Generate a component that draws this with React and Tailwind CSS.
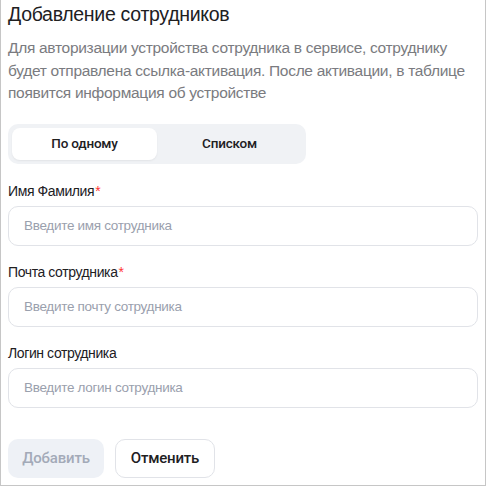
import React, { useState } from 'react';

const FIELDS = [
  { label: 'Имя Фамилия', placeholder: 'Введите имя сотрудника', required: true },
  { label: 'Почта сотрудника', placeholder: 'Введите почту сотрудника', required: true },
  { label: 'Логин сотрудника', placeholder: 'Введите логин сотрудника', required: false },
];

const TABS = [
  { id: 'single', label: 'По одному' },
  { id: 'list', label: 'Списком' },
];

export default function App() {
  const [tab, setTab] = useState('single');

  return (
    <div className="h-[486px] w-[486px] border-x border-b border-[#c6c6c6] bg-white px-[7px] font-['Liberation_Sans',Arial,sans-serif] text-[#21201f]">
      <h1 className="text-[19.5px] leading-[28px] tracking-[-0.3px]">Добавление сотрудников</h1>
      <p className="mt-[9px] text-[15.5px] leading-[22.5px] tracking-[-0.3px] text-[#7a7b80]">
        Для авторизации устройства сотрудника в сервисе, сотруднику будет отправлена ссылка-активация. После
        активации, в таблице появится информация об устройстве
      </p>

      {/* Mode switch */}
      <div className="mt-[19px] flex h-10 w-[298px] rounded-[10px] bg-[#f0f2f5] p-1">
        {TABS.map((t) => (
          <button
            key={t.id}
            type="button"
            onClick={() => setTab(t.id)}
            className={`flex-1 rounded-[8px] font-['Roboto',sans-serif] text-[13.5px] font-medium tracking-[-0.2px] ${
              tab === t.id ? 'bg-white shadow-[0_1px_2px_rgba(0,0,0,0.06)]' : ''
            }`}
          >
            {t.label}
          </button>
        ))}
      </div>

      {/* Fields */}
      <div className="mt-[17px] flex flex-col gap-4">
        {FIELDS.map((f) => (
          <div key={f.label} className="flex flex-col gap-[5px]">
            <label className="text-[14px] leading-5 tracking-[-0.4px]">
              {f.label}
              {f.required && <span className="ml-[1px] text-[#f33]">*</span>}
            </label>
            <input
              type="text"
              placeholder={f.placeholder}
              className="h-10 w-full rounded-[10px] border border-[#e1e3e8] px-[15px] text-[13.5px] tracking-[-0.3px] outline-none placeholder:text-[#9aa0ad]"
            />
          </div>
        ))}
      </div>

      {/* Actions */}
      <div className="mt-[31px] flex gap-[11px] font-['Roboto',sans-serif] text-[15px] font-medium tracking-[-0.2px]">
        <button
          type="button"
          disabled
          className="h-[39px] w-[96px] rounded-[10px] bg-[#eef1f6] text-[#a3aab8]"
        >
          Добавить
        </button>
        <button
          type="button"
          className="h-[39px] w-[100px] rounded-[10px] border border-[#e1e3e8] bg-white text-[#21201f]"
        >
          Отменить
        </button>
      </div>
    </div>
  );
}
